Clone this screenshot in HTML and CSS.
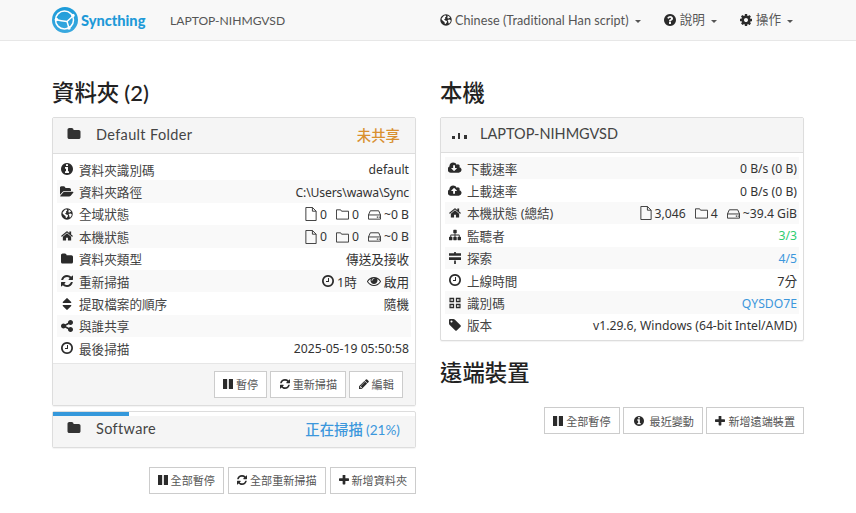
FILE: index.html
```html
<!DOCTYPE html>
<html lang="zh-Hant">
<head>
<meta charset="utf-8">
<title>Syncthing</title>
<link rel="stylesheet" href="styles.css">
</head>
<body>
<svg class="sprite" width="0" height="0" aria-hidden="true">
  <symbol id="info" viewBox="128 128 1536 1536"><path d="M1152 1376v-160q0-14-9-23t-23-9h-96v-512q0-14-9-23t-23-9h-320q-14 0-23 9t-9 23v160q0 14 9 23t23 9h96v320h-96q-14 0-23 9t-9 23v160q0 14 9 23t23 9h448q14 0 23-9t9-23zm-128-896v-160q0-14-9-23t-23-9h-192q-14 0-23 9t-9 23v160q0 14 9 23t23 9h192q14 0 23-9t9-23zm640 416q0 209-103 385.500t-279.500 279.500-385.500 103-385.500-103-279.500-279.500-103-385.500 103-385.500 279.500-279.500 385.500-103 385.500 103 279.500 279.500 103 385.500z"/></symbol>
  <symbol id="folder" viewBox="64 128 1664 1536"><path d="M1728 608v704q0 92-66 158t-158 66h-1216q-92 0-158-66t-66-158v-960q0-92 66-158t158-66h320q92 0 158 66t66 158v32h672q92 0 158 66t66 158z"/></symbol>
  <symbol id="folder-open" viewBox="0 128 1920 1536"><path d="M1845 931q0 35-35 73l-336 396q-43 51-120.500 86.500t-143.500 35.500h-1088q-34 0-60.500-13t-26.500-43q0-35 35-73l336-396q43-51 120.500-86.500t143.500-35.500h1088q34 0 60.500 13t26.500 43zm-343-344v160h-832q-94 0-197 47.500t-164 119.500l-337 396-5 6q0-4-.5-12.500t-.5-12.500v-960q0-92 66-158t158-66h320q92 0 158 66t66 158v32h544q92 0 158 66t66 158z"/></symbol>
  <symbol id="globe" viewBox="0 0 24 24"><circle cx="12" cy="12" r="11.500"/><path fill="#fff" d="M3.500 8.500 8 3.500l3-.8 1.500 2.500-2.500 2 .5 2.300-2.500 1 2.500 2.500 3.500.8-.5 3-2.500 3-1.500-.5-.5-3.500-3-2-3-3.500zM14.500 2.800l4 2 2 3-3-.5-.5 2-2.500-1.500 1-2.500zM15 12l4-1 2.500 1.500-.5 3-2.500 3.500-1.500-.5-.5-3.500z"/></symbol>
  <symbol id="home" viewBox="64 192 1664 1408"><path d="M1472 992v480q0 26-19 45t-45 19h-384v-384h-256v384h-384q-26 0-45-19t-19-45v-480q0-1 .5-3t.5-3l575-474 575 474q1 2 1 6zm223-69l-62 74q-8 9-21 11h-3q-13 0-21-7l-692-577-692 577q-12 8-24 7-13-2-21-11l-62-74q-8-10-7-23.500t11-21.500l719-599q32-26 76-26t76 26l244 204v-195q0-14 9-23t23-9h192q14 0 23 9t9 23v408l219 182q10 8 11 21.500t-7 23.500z"/></symbol>
  <symbol id="refresh" viewBox="128 128 1536 1536"><path d="M1639 1056q0 5-1 7-64 268-268 434.500t-478 166.500q-146 0-282.500-55t-243.500-157l-129 129q-19 19-45 19t-45-19-19-45v-448q0-26 19-45t45-19h448q26 0 45 19t19 45-19 45l-137 137q71 66 161 102t187 36q134 0 250-65t186-179q11-17 53-117 8-23 30-23h192q13 0 22.500 9.500t9.500 22.500zm25-800v448q0 26-19 45t-45 19h-448q-26 0-45-19t-19-45 19-45l138-138q-148-137-349-137-134 0-250 65t-186 179q-11 17-53 117-8 23-30 23h-199q-13 0-22.500-9.500t-9.500-22.500v-7q65-268 270-434.500t480-166.500q146 0 284 55.500t245 156.500l130-129q19-19 45-19t45 19 19 45z"/></symbol>
  <symbol id="clock" viewBox="128 128 1536 1536"><path d="M1024 544v448q0 14-9 23t-23 9h-320q-14 0-23-9t-9-23v-64q0-14 9-23t23-9h224v-352q0-14 9-23t23-9h64q14 0 23 9t9 23zm416 352q0-148-73-273t-198-198-273-73-273 73-198 198-73 273 73 273 198 198 273 73 273-73 198-198 73-273zm224 0q0 209-103 385.500t-279.500 279.500-385.500 103-385.500-103-279.500-279.500-103-385.500 103-385.500 279.500-279.500 385.500-103 385.500 103 279.500 279.500 103 385.500z"/></symbol>
  <symbol id="sort" viewBox="320 192 1152 1408"><path d="M1408 1088q0 26-19 45l-448 448q-19 19-45 19t-45-19l-448-448q-19-19-19-45t19-45 45-19h896q26 0 45 19t19 45zm0-384q0 26-19 45t-45 19h-896q-26 0-45-19t-19-45 19-45l448-448q19-19 45-19t45 19l448 448q19 19 19 45z"/></symbol>
  <symbol id="share" viewBox="128 128 1536 1536"><path d="M1344 1024q133 0 226.500 93.500t93.500 226.500-93.500 226.500-226.500 93.500-226.500-93.500-93.500-226.500q0-12 2-34l-360-180q-92 86-218 86-133 0-226.500-93.500t-93.500-226.500 93.500-226.500 226.500-93.500q126 0 218 86l360-180q-2-22-2-34 0-133 93.500-226.500t226.500-93.500 226.500 93.500 93.500 226.500-93.500 226.500-226.500 93.500q-126 0-218-86l-360 180q2 22 2 34t-2 34l360 180q92-86 218-86z"/></symbol>
  <symbol id="pause" viewBox="128 128 1536 1536"><path d="M1664 192v1408q0 26-19 45t-45 19h-512q-26 0-45-19t-19-45v-1408q0-26 19-45t45-19h512q26 0 45 19t19 45zm-896 0v1408q0 26-19 45t-45 19h-512q-26 0-45-19t-19-45v-1408q0-26 19-45t45-19h512q26 0 45 19t19 45z"/></symbol>
  <symbol id="plus" viewBox="192 192 1408 1408"><path d="M1600 736v192q0 40-28 68t-68 28h-416v416q0 40-28 68t-68 28h-192q-40 0-68-28t-28-68v-416h-416q-40 0-68-28t-28-68v-192q0-40 28-68t68-28h416v-416q0-40 28-68t68-28h192q40 0 68 28t28 68v416h416q40 0 68 28t28 68z"/></symbol>
  <symbol id="pencil" viewBox="128 128 1536 1536"><path d="M491 1536l91-91-235-235-91 91v107h128v128h107zm523-928q0-22-22-22-10 0-17 7l-542 542q-7 7-7 17 0 22 22 22 10 0 17-7l542-542q7-7 7-17zm-54-192l416 416-832 832h-416v-416zm683 96q0 53-37 90l-166 166-416-416 166-165q36-38 90-38 53 0 91 38l235 234q37 39 37 91z"/></symbol>
  <symbol id="eye" viewBox="0 256 1792 1280"><path d="M1664 960q-152-236-381-353 61 104 61 225 0 185-131.500 316.500t-316.500 131.500-316.500-131.500-131.500-316.500q0-121 61-225-229 117-381 353 133 205 333.500 326.500t434.500 121.500 434.500-121.500 333.500-326.500zm-720-384q0-20-14-34t-34-14q-125 0-214.500 89.500t-89.500 214.500q0 20 14 34t34 14 34-14 14-34q0-86 61-147t147-61q20 0 34-14t14-34zm848 384q0 34-20 69-140 230-376.500 368.500t-499.500 138.500-499.500-139-376.500-368q-20-35-20-69t20-69q140-229 376.500-368t499.500-139 499.500 139 376.500 368q20 35 20 69z"/></symbol>
  <symbol id="tag" viewBox="128 128 1536 1536"><path d="M576 448q0-53-37.500-90.500t-90.500-37.500-90.500 37.500-37.500 90.500 37.500 90.500 90.500 37.500 90.500-37.500 37.500-90.500zm1067 576q0 53-37 90l-491 492q-39 37-91 37-53 0-90-37l-715-716q-38-37-64.500-101t-26.500-117v-416q0-52 38-90t90-38h416q53 0 117 26.500t102 64.500l715 714q37 39 37 91z"/></symbol>
  <symbol id="sitemap" viewBox="0 128 1792 1536"><path d="M1792 1248v320q0 40-28 68t-68 28h-320q-40 0-68-28t-28-68v-320q0-40 28-68t68-28h96v-192h-512v192h96q40 0 68 28t28 68v320q0 40-28 68t-68 28h-320q-40 0-68-28t-28-68v-320q0-40 28-68t68-28h96v-192h-512v192h96q40 0 68 28t28 68v320q0 40-28 68t-68 28h-320q-40 0-68-28t-28-68v-320q0-40 28-68t68-28h96v-192q0-52 38-90t90-38h512v-192h-96q-40 0-68-28t-28-68v-320q0-40 28-68t68-28h320q40 0 68 28t28 68v320q0 40-28 68t-68 28h-96v192h512q52 0 90 38t38 90v192h96q40 0 68 28t28 68z"/></symbol>
  <symbol id="question" viewBox="128 128 1536 1536"><path d="M1024 1376v-192q0-14-9-23t-23-9h-192q-14 0-23 9t-9 23v192q0 14 9 23t23 9h192q14 0 23-9t9-23zm256-672q0-88-55.500-163t-138.500-116-170-41q-243 0-371 213-15 24 8 42l132 100q7 6 19 6 16 0 25-12 53-68 86-92 34-24 86-24 48 0 85.500 26t37.500 59q0 38-20 61t-68 45q-63 28-115.500 86.500t-52.500 125.500v36q0 14 9 23t23 9h192q14 0 23-9t9-23q0-19 21.500-49.500t54.500-49.500q32-18 49-28.500t46-35 44.500-48 28-60.500 12.500-81zm384 192q0 209-103 385.500t-279.500 279.500-385.500 103-385.500-103-279.500-279.500-103-385.500 103-385.500 279.500-279.500 385.500-103 385.500 103 279.500 279.500 103 385.500z"/></symbol>
  <symbol id="cog" viewBox="128 128 1536 1536"><path d="M1152 896q0-106-75-181t-181-75-181 75-75 181 75 181 181 75 181-75 75-181zm512-109v222q0 12-8 23t-20 13l-185 28q-19 54-39 91 35 50 107 138 10 12 10 25t-9 23q-27 37-99 108t-94 71q-12 0-26-9l-138-108q-44 23-91 38-16 136-29 186-7 28-36 28h-222q-14 0-24.500-8.500t-11.500-21.500l-28-184q-49-16-90-37l-141 107q-10 9-25 9-14 0-25-11-126-114-165-168-7-10-7-23 0-12 8-23 15-21 51-66.500t54-70.500q-27-50-41-99l-183-27q-13-2-21-12.500t-8-23.500v-222q0-12 8-23t19-13l186-28q14-46 39-92-40-57-107-138-10-12-10-24 0-10 9-23 26-36 98.500-107.500t94.500-71.500q13 0 26 10l138 107q44-23 91-38 16-136 29-186 7-28 36-28h222q14 0 24.500 8.500t11.500 21.500l28 184q49 16 90 37l142-107q9-9 24-9 13 0 25 10 129 119 165 170 7 8 7 22 0 12-8 23-15 21-51 66.500t-54 70.500q26 50 41 98l183 28q13 2 21 12.500t8 23.500z"/></symbol>
  <symbol id="cloud-down" viewBox="0 256 1920 1280"><path d="M1216 928q0-14-9-23t-23-9h-224v-352q0-13-9.500-22.500t-22.500-9.500h-192q-13 0-22.500 9.500t-9.500 22.500v352h-224q-13 0-22.500 9.500t-9.500 22.500q0 14 9 23l352 352q9 9 23 9t23-9l351-351q10-12 10-24zm640 224q0 159-112.500 271.500t-271.500 112.500h-1088q-185 0-316.500-131.500t-131.500-316.500q0-130 70-240t188-165q-2-30-2-43 0-212 150-362t362-150q156 0 285.500 87t188.500 231q71-62 166-62 106 0 181 75t75 181q0 76-41 138 130 31 213.500 135.500t83.500 238.500z"/></symbol>
  <symbol id="cloud-up" viewBox="0 256 1920 1280"><path d="M1216 864q0-14-9-23l-352-352q-9-9-23-9t-23 9l-351 351q-10 12-10 24 0 14 9 23t23 9h224v352q0 13 9.500 22.500t22.500 9.500h192q13 0 22.500-9.500t9.500-22.500v-352h224q13 0 22.500-9.500t9.500-22.500zm640 288q0 159-112.500 271.500t-271.500 112.500h-1088q-185 0-316.500-131.500t-131.500-316.500q0-130 70-240t188-165q-2-30-2-43 0-212 150-362t362-150q156 0 285.500 87t188.500 231q71-62 166-62 106 0 181 75t75 181q0 76-41 138 130 31 213.500 135.500t83.500 238.500z"/></symbol>
  <symbol id="signs" viewBox="0 0 14 14"><path d="M6 0h2v1.500h6v3H0v-3h6zM0 6.200h14v3H0zM6 9.800h2V14H6z"/></symbol>
  <symbol id="qr" viewBox="0 0 14 14"><path fill-rule="evenodd" d="M.5 1H6v5H.5zM2 2.300v2.400h2.500V2.300zM8 1h5.500v5H8zM9.500 2.300v2.400H12V2.300zM.5 8H6v5H.5zM2 9.300v2.400h2.500V9.300zM8 8h5.500v5H8zM9.500 9.300v2.400H12V9.300z"/><path d="M2.800 3h1v1h-1zM10.300 3h1v1h-1zM2.800 10h1v1h-1zM10.300 10h1v1h-1z"/></symbol>
  <symbol id="file-o" viewBox="0 0 12 15"><path fill="none" stroke="currentColor" d="M.5.500h7l4 4v10H.5zM7.500.500v4h4"/></symbol>
  <symbol id="folder-o" viewBox="0 0 14 12"><path fill="none" stroke="currentColor" d="M.5 1.500h4.500l1 1.500h7.500v8.500H.5z"/></symbol>
  <symbol id="hdd-o" viewBox="0 0 14 11"><path fill="none" stroke="currentColor" d="M2.500 1.500h9l2 4.500v4.500H.5V6zM.5 6h13"/><path fill="currentColor" d="M9.500 7.700h1.200v1.200H9.500zM11.500 7.700h1.200v1.200h-1.200z"/></symbol>
</svg>

<header class="navbar">
  <div class="brand">
    <svg class="logo" viewBox="0 0 26 26" aria-hidden="true">
      <defs><linearGradient id="lg" x1="0" y1="0" x2="0" y2="1"><stop offset="0" stop-color="#1c9bd9"/><stop offset="1" stop-color="#3aa9df"/></linearGradient></defs>
      <circle cx="13" cy="13" r="13" fill="url(#lg)"/>
      <circle cx="12.500" cy="13" r="9" fill="none" stroke="#fff" stroke-width="1.500"/>
      <path d="M3.500 12.500C8 13.500 11 14 15 14.500L21 9M15 14.500L17 21" fill="none" stroke="#fff" stroke-width="1.500"/>
      <circle cx="4.500" cy="12.500" r="1.700" fill="#fff"/><circle cx="21" cy="8.500" r="1.700" fill="#fff"/><circle cx="17" cy="21" r="1.700" fill="#fff"/>
    </svg>
    <span class="brand-name">Syncthing</span>
  </div>
  <span class="host">LAPTOP-NIHMGVSD</span>
  <nav class="menu">
    <span class="menu-item"><svg class="ic"><use href="#globe"/></svg><span class="lang">Chinese (Traditional Han script)</span><i class="caret"></i></span>
    <span class="menu-item"><svg class="ic"><use href="#question"/></svg><span class="menu-cjk">說明</span><i class="caret"></i></span>
    <span class="menu-item"><svg class="ic"><use href="#cog"/></svg><span class="menu-cjk">操作</span><i class="caret"></i></span>
  </nav>
</header>

<main class="columns">
  <section class="col">
    <h1 class="title">資料夾 <span class="count">(2)</span></h1>
    <div class="panel">
      <div class="panel-head">
        <svg class="head-ic"><use href="#folder"/></svg>
        <span class="panel-name">Default Folder</span>
        <span class="state warn">未共享</span>
      </div>
      <div class="panel-body">
        <div class="row"><span class="label"><svg class="ic"><use href="#info"/></svg>資料夾識別碼</span><span class="val num">default</span></div>
        <div class="row"><span class="label"><svg class="ic wide"><use href="#folder-open"/></svg>資料夾路徑</span><span class="val num path">C:\Users\wawa\Sync</span></div>
        <div class="row"><span class="label"><svg class="ic"><use href="#globe"/></svg>全域狀態</span><span class="val num"><svg class="o file"><use href="#file-o"/></svg>0<svg class="o fold"><use href="#folder-o"/></svg>0<svg class="o hdd"><use href="#hdd-o"/></svg>~0 B</span></div>
        <div class="row"><span class="label"><svg class="ic"><use href="#home"/></svg>本機狀態</span><span class="val num"><svg class="o file"><use href="#file-o"/></svg>0<svg class="o fold"><use href="#folder-o"/></svg>0<svg class="o hdd"><use href="#hdd-o"/></svg>~0 B</span></div>
        <div class="row"><span class="label"><svg class="ic"><use href="#folder"/></svg>資料夾類型</span><span class="val">傳送及接收</span></div>
        <div class="row"><span class="label"><svg class="ic"><use href="#refresh"/></svg>重新掃描</span><span class="val"><svg class="ic inl"><use href="#clock"/></svg>1時<svg class="ic inl eye"><use href="#eye"/></svg>啟用</span></div>
        <div class="row"><span class="label"><svg class="ic"><use href="#sort"/></svg>提取檔案的順序</span><span class="val">隨機</span></div>
        <div class="row"><span class="label"><svg class="ic"><use href="#share"/></svg>與誰共享</span><span class="val"></span></div>
        <div class="row"><span class="label"><svg class="ic"><use href="#clock"/></svg>最後掃描</span><span class="val num">2025-05-19 05:50:58</span></div>
      </div>
      <div class="panel-foot">
        <span class="btn"><svg class="ic"><use href="#pause"/></svg>暫停</span>
        <span class="btn"><svg class="ic"><use href="#refresh"/></svg>重新掃描</span>
        <span class="btn"><svg class="ic"><use href="#pencil"/></svg>編輯</span>
      </div>
    </div>
    <div class="panel second">
      <div class="progress"></div>
      <div class="panel-head slim">
        <svg class="head-ic"><use href="#folder"/></svg>
        <span class="panel-name">Software</span>
        <span class="state info">正在掃描 <small class="pct">(21%)</small></span>
      </div>
    </div>
    <div class="actions folders">
      <span class="btn"><svg class="ic"><use href="#pause"/></svg>全部暫停</span>
      <span class="btn"><svg class="ic"><use href="#refresh"/></svg>全部重新掃描</span>
      <span class="btn"><svg class="ic"><use href="#plus"/></svg>新增資料夾</span>
    </div>
  </section>

  <section class="col">
    <h1 class="title">本機</h1>
    <div class="panel">
      <div class="panel-head device">
        <svg class="identicon" viewBox="0 0 15 8" aria-hidden="true"><path d="M0 5h3v3H0zM6 2h2v6H6zM12 4h3v4h-3z"/></svg>
        <span class="panel-name">LAPTOP-NIHMGVSD</span>
      </div>
      <div class="panel-body compact">
        <div class="row"><span class="label"><svg class="ic wide"><use href="#cloud-down"/></svg>下載速率</span><span class="val num">0 B/s (0 B)</span></div>
        <div class="row"><span class="label"><svg class="ic wide"><use href="#cloud-up"/></svg>上載速率</span><span class="val num">0 B/s (0 B)</span></div>
        <div class="row"><span class="label"><svg class="ic"><use href="#home"/></svg>本機狀態 (總結)</span><span class="val num"><svg class="o file"><use href="#file-o"/></svg>3,046<svg class="o fold"><use href="#folder-o"/></svg>4<svg class="o hdd"><use href="#hdd-o"/></svg>~39.4 GiB</span></div>
        <div class="row"><span class="label"><svg class="ic"><use href="#sitemap"/></svg>監聽者</span><span class="val num ok">3/3</span></div>
        <div class="row"><span class="label"><svg class="ic"><use href="#signs"/></svg>探索</span><span class="val num link">4/5</span></div>
        <div class="row"><span class="label"><svg class="ic"><use href="#clock"/></svg>上線時間</span><span class="val">7分</span></div>
        <div class="row"><span class="label"><svg class="ic"><use href="#qr"/></svg>識別碼</span><span class="val num link">QYSDO7E</span></div>
        <div class="row"><span class="label"><svg class="ic"><use href="#tag"/></svg>版本</span><span class="val num">v1.29.6, Windows (64-bit Intel/AMD)</span></div>
      </div>
    </div>
    <h1 class="title remote">遠端裝置</h1>
    <div class="actions devices">
      <span class="btn"><svg class="ic"><use href="#pause"/></svg>全部暫停</span>
      <span class="btn"><svg class="ic fixed"><use href="#info"/></svg>最近變動</span>
      <span class="btn"><svg class="ic"><use href="#plus"/></svg>新增遠端裝置</span>
    </div>
  </section>
</main>
</body>
</html>
```
FILE: styles.css
```css
* { box-sizing: border-box; }
html, body { margin: 0; padding: 0; }
body {
  width: 856px;
  height: 513px;
  overflow: hidden;
  background: #fff;
  color: #333;
  font-family: Lato, "Noto Sans CJK TC", sans-serif;
  font-size: 14px;
}
.sprite { position: absolute; }
.ic { width: 12px; height: 12px; fill: #2b2b2b; flex: none; }

.navbar {
  display: flex;
  align-items: center;
  height: 41px;
  padding: 0 63px 0 52px;
  background: #f8f8f8;
  border-bottom: 1px solid #e7e7e7;
}
.brand { display: flex; align-items: center; gap: 3px; width: 118px; }
.logo { width: 26px; height: 26px; flex: none; }
.brand-name { color: #1e9ad8; font-weight: 900; font-size: 14.600px; }
.host { color: #555; font-size: 12.100px; }
.menu { margin-left: auto; display: flex; gap: 23px; color: #555; font-size: 12.600px; }
.menu-item { display: flex; align-items: center; }
.menu-item .ic { margin-right: 4px; }
.menu-cjk { line-height: 14px; padding-bottom: 1px; }
.lang { letter-spacing: .06px; margin-left: -1px; }
.caret {
  width: 0; height: 0; margin-left: 6px; margin-top: 2px;
  border-top: 3.500px solid #555;
  border-left: 3.500px solid transparent;
  border-right: 3.500px solid transparent;
}

.columns {
  display: grid;
  grid-template-columns: 364px 364px;
  column-gap: 24px;
  padding: 0 52px;
  align-items: start;
}
.title {
  margin: 0;
  height: 76px;
  padding-top: 35px;
  font-size: 22.400px;
  line-height: 31px;
  font-weight: 500;
  color: #222;
  font-family: "Noto Sans CJK TC", sans-serif;
}
.count { font-family: Lato, sans-serif; font-size: 22px; }
.panel { border: 1px solid #ddd; border-radius: 2px; background: #fff; box-shadow: 0 1px 1px rgba(0,0,0,.05); }
.panel-head {
  display: flex;
  align-items: center;
  height: 36px;
  padding: 0 15px 3px 14px;
  background: #f5f5f5;
  border-bottom: 1px solid #ddd;
}
.panel-head.slim { height: 31px; border-bottom: 0; padding-bottom: 6px; }
.panel-head.device { height: 35px; padding-left: 11px; }
.head-ic { width: 14px; height: 12px; fill: #333; flex: none; margin-right: 15px; }
.identicon { width: 15px; height: 8px; fill: #333; margin-right: 13px; margin-top: 3px; }
.panel-name { font-size: 14.500px; color: #444; letter-spacing: .35px; }
.device .panel-name { letter-spacing: 0; }
.state { margin-left: auto; font-size: 14.400px; font-family: "Noto Sans CJK TC", sans-serif; font-weight: 500; }
.warn { color: #d9902f; }
.info { color: #3c97dc; }
.pct { font-size: 13.600px; font-weight: 400; font-family: Lato, sans-serif; }
.second { margin-top: 5px; }
.progress { width: 21%; height: 4px; background: #3498db; }

.panel-body { padding: 4px 4px 3px; }
.panel-body.compact { padding: 4px; }
.row {
  display: flex;
  justify-content: space-between;
  align-items: center;
  height: 22.400px;
  padding: 0 2px 0 4px;
  font-size: 12.600px;
  color: #333;
  font-family: "Noto Sans", "Noto Sans CJK TC", sans-serif;
  white-space: nowrap;
}
.row:nth-child(even) { background: #f9f9f9; }
.compact .row:nth-child(even) { background: transparent; }
.compact .row:nth-child(odd) { background: #f9f9f9; }
.label { display: flex; align-items: center; color: #444; }
.label .ic { width: 12px; margin-right: 6px; }
.label .ic.wide { width: 14px; margin-left: -1px; margin-right: 5px; }
.val { display: flex; align-items: center; }
.num { font-size: 12.200px; padding-top: 1px; }
.path { letter-spacing: -.15px; }
.o { color: #333; flex: none; margin-right: 3px; }
.o.file { width: 12px; height: 14px; }
.o.fold { width: 13px; height: 12px; margin-left: 9px; }
.o.hdd { width: 13px; height: 11px; margin-left: 9px; }
.inl { margin-right: 3px; }
.eye { width: 14px; margin-left: 10px; }
.ok { color: #2ecc71; }
.link { color: #3c97dc; }

.panel-foot {
  display: flex;
  justify-content: flex-end;
  gap: 3px;
  height: 42px;
  padding: 7px 12px 0 0;
  background: #f5f5f5;
  border-top: 1px solid #e6e6e6;
}
.btn {
  display: inline-flex;
  align-items: center;
  height: 27px;
  padding: 0 8px;
  background: #fff;
  border: 1px solid #ccc;
  color: #555;
  font-size: 11.100px;
  font-family: "Noto Sans CJK TC", sans-serif;
  white-space: nowrap;
}
.panel-foot .btn { padding: 0 8.250px; }
.btn .ic { width: 10px; height: 10px; margin-right: 3px; }
.btn .ic.fixed { margin-left: 2px; margin-right: 5.500px; }
.actions { display: flex; justify-content: flex-end; gap: 4px; }
.folders { margin-top: 19px; }
.devices { gap: 3.500px; }
.title.remote { height: 66px; padding-top: 15px; }
```
